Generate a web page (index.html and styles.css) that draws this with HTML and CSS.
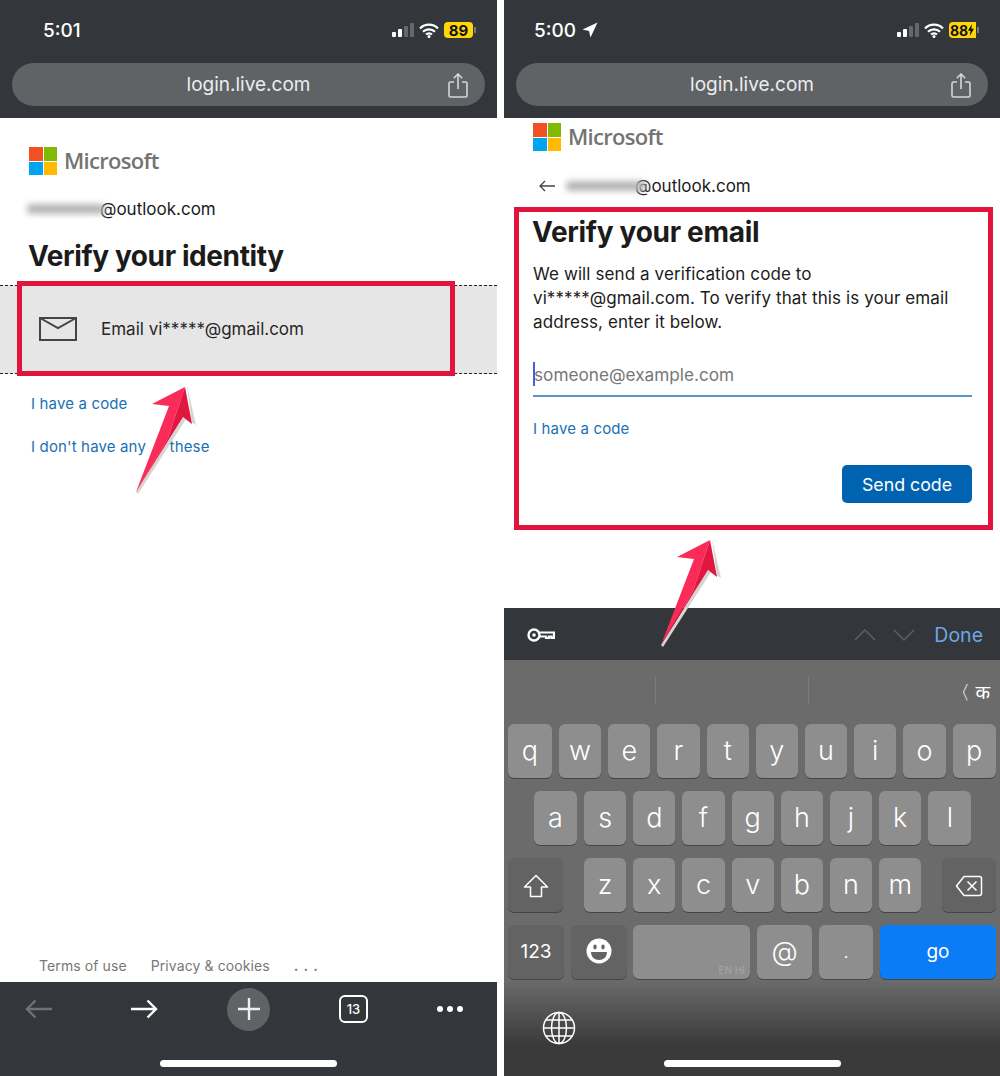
FILE: index.html
```html
<!DOCTYPE html>
<html lang="en">
	<head>
		<meta charset="UTF-8" />
		<title>Verify your identity</title>
		<link rel="stylesheet" href="styles.css">
	</head>
	<body>
		<div class="phone phone-left">
			<header class="top-bar">
				<div class="status-bar">
					<span class="time">5:01</span>
					<div class="status-icons">
						<svg class="signal" viewBox="0 0 22 14"><rect x="0" y="9" width="4" height="5" rx="1" fill="#fff"/><rect x="6" y="6" width="4" height="8" rx="1" fill="#fff"/><rect x="12" y="3" width="4" height="11" rx="1" fill="#66696c"/><rect x="18" y="0" width="4" height="14" rx="1" fill="#66696c"/></svg>
						<svg class="wifi" viewBox="0 0 20 15"><path d="M1 5.500a12.600 12.600 0 0 1 18 0M4 8.800a8.400 8.400 0 0 1 12 0M7 11.600a4.200 4.200 0 0 1 6 0" fill="none" stroke="#fff" stroke-width="2.200"/><circle cx="10" cy="13.400" r="1.500" fill="#fff"/></svg>
						<div class="battery"><span class="battery-level">89</span></div>
						<span class="battery-tip"></span>
					</div>
				</div>
				<div class="url-pill">
					<span>login.live.com</span>
					<svg class="share" viewBox="0 0 20 25"><path d="M6 9H2.500A1.500 1.500 0 0 0 1 10.500V22.500A1.500 1.500 0 0 0 2.500 24H17.500A1.500 1.500 0 0 0 19 22.500V10.500A1.500 1.500 0 0 0 17.500 9H14M10 16V1.500M5.800 5.200L10 1L14.200 5.200" fill="none" stroke="#d5d6d7" stroke-width="1.600"/></svg>
				</div>
			</header>

			<main class="page">
				<div class="ms-logo ms-logo-left">
					<div class="ms-squares"><i class="red"></i><i class="green"></i><i class="blue"></i><i class="yellow"></i></div>
					<span>Microsoft</span>
				</div>
				<div class="account account-left"><span class="smudge smudge-left"></span>@outlook.com</div>
				<h1 class="title-left">Verify your identity</h1>
				<div class="option">
					<svg class="mail" viewBox="0 0 38 24"><path d="M1 1H37V23H1ZM1 1L19 11L37 1" fill="none" stroke="#444" stroke-width="2"/></svg>
					<span>Email vi*****@gmail.com</span>
				</div>
				<a class="link link-first">I have a code</a>
				<a class="link link-second">I don't have any <span class="under-arrow">of</span> these</a>
				<footer class="legal">
					<span>Terms of use</span>
					<span>Privacy &amp; cookies</span>
					<span class="legal-more">...</span>
				</footer>
			</main>

			<nav class="bottom-bar">
				<div class="tools">
					<svg class="nav-arrow" viewBox="0 0 28 20"><path d="M27 10H2M10.500 1.500L2 10L10.500 18.500" fill="none" stroke="#6f7174" stroke-width="2.400"/></svg>
					<svg class="nav-arrow nav-forward" viewBox="0 0 28 20"><path d="M1 10H26M17.500 1.500L26 10L17.500 18.500" fill="none" stroke="#fff" stroke-width="2.400"/></svg>
					<div class="new-tab"><svg viewBox="0 0 22 22"><path d="M11 0V22M0 11H22" stroke="#eee" stroke-width="2.400"/></svg></div>
					<div class="tab-count">13</div>
					<div class="more"><i></i><i></i><i></i></div>
				</div>
				<div class="home-bar"></div>
			</nav>

			<div class="red-box"></div>
			<svg class="arrow arrow-left" viewBox="0 0 70 116"><use href="#arrow-shape"/></svg>
		</div>

		<div class="phone phone-right">
			<header class="top-bar">
				<div class="status-bar">
					<span class="time time-right">5:00</span>
					<svg class="location" viewBox="0 0 16 16"><path d="M15.500 .5L8.500 15.500L7 9L.5 7.500Z" fill="#fff"/></svg>
					<div class="status-icons">
						<svg class="signal" viewBox="0 0 22 14"><rect x="0" y="9" width="4" height="5" rx="1" fill="#fff"/><rect x="6" y="6" width="4" height="8" rx="1" fill="#fff"/><rect x="12" y="3" width="4" height="11" rx="1" fill="#66696c"/><rect x="18" y="0" width="4" height="14" rx="1" fill="#66696c"/></svg>
						<svg class="wifi" viewBox="0 0 20 15"><path d="M1 5.500a12.600 12.600 0 0 1 18 0M4 8.800a8.400 8.400 0 0 1 12 0M7 11.600a4.200 4.200 0 0 1 6 0" fill="none" stroke="#fff" stroke-width="2.200"/><circle cx="10" cy="13.400" r="1.500" fill="#fff"/></svg>
						<div class="battery battery-charging"><span class="battery-level">88</span><svg class="bolt" viewBox="0 0 7 14"><path d="M4.500 0L0 8H3L2 14L7 5.500H4Z" fill="#111"/></svg></div>
						<span class="battery-tip"></span>
					</div>
				</div>
				<div class="url-pill">
					<span>login.live.com</span>
					<svg class="share" viewBox="0 0 20 25"><path d="M6 9H2.500A1.500 1.500 0 0 0 1 10.500V22.500A1.500 1.500 0 0 0 2.500 24H17.500A1.500 1.500 0 0 0 19 22.500V10.500A1.500 1.500 0 0 0 17.500 9H14M10 16V1.500M5.800 5.200L10 1L14.200 5.200" fill="none" stroke="#d5d6d7" stroke-width="1.600"/></svg>
				</div>
			</header>

			<main class="page page-email">
				<div class="ms-logo ms-logo-right">
					<div class="ms-squares"><i class="red"></i><i class="green"></i><i class="blue"></i><i class="yellow"></i></div>
					<span>Microsoft</span>
				</div>
				<div class="account account-right">
					<svg class="back" viewBox="0 0 16 12"><path d="M16 6H1M6 1L1 6L6 11" fill="none" stroke="#444" stroke-width="1.300"/></svg>
					<span class="smudge smudge-right"></span>@outlook.com
				</div>
				<section class="card">
					<h1>Verify your email</h1>
					<p>We will send a verification code to<br>vi*****@gmail.com. To verify that this is your email<br>address, enter it below.</p>
					<div class="field"><i class="caret"></i>someone@example.com</div>
					<a class="link">I have a code</a>
					<div class="actions"><button class="send-btn">Send code</button></div>
				</section>
			</main>

			<div class="kb-toolbar">
				<svg class="key-icon" viewBox="0 0 28 14"><circle cx="7" cy="7" r="5.500" fill="none" stroke="#fff" stroke-width="2.400"/><circle cx="7" cy="7" r="1.800" fill="#fff"/><path d="M12.500 4.500H27V10H24.500V8.500H22V10H19V8.500H12.500" fill="none" stroke="#fff" stroke-width="2.200"/></svg>
				<svg class="chevron chevron-up" viewBox="0 0 22 12"><path d="M1 11L11 1L21 11" fill="none" stroke="#5d6063" stroke-width="1.500"/></svg>
				<svg class="chevron" viewBox="0 0 22 12"><path d="M1 1L11 11L21 1" fill="none" stroke="#5d6063" stroke-width="1.500"/></svg>
				<span class="done">Done</span>
			</div>

			<div class="keyboard">
				<div class="suggestions">
					<i class="sug-line sug-line-first"></i>
					<i class="sug-line sug-line-second"></i>
					<span class="lang-hint">〈 क</span>
				</div>
				<div class="kb-row kb-row-one">
					<span class="k">q</span><span class="k">w</span><span class="k">e</span><span class="k">r</span><span class="k">t</span><span class="k">y</span><span class="k">u</span><span class="k">i</span><span class="k">o</span><span class="k">p</span>
				</div>
				<div class="kb-row kb-row-two">
					<span class="k">a</span><span class="k">s</span><span class="k">d</span><span class="k">f</span><span class="k">g</span><span class="k">h</span><span class="k">j</span><span class="k">k</span><span class="k">l</span>
				</div>
				<div class="kb-row">
					<span class="k k-dark k-shift"><svg viewBox="0 0 26 24"><path d="M13 1.500L24.500 13H18.500V22.500H7.500V13H1.500Z" fill="none" stroke="#fff" stroke-width="1.500" stroke-linejoin="round"/></svg></span>
					<span class="k">z</span><span class="k">x</span><span class="k">c</span><span class="k">v</span><span class="k">b</span><span class="k">n</span><span class="k">m</span>
					<span class="k k-dark k-delete"><svg viewBox="0 0 28 22"><path d="M9 1.500H24.500A2 2 0 0 1 26.500 3.500V18.500A2 2 0 0 1 24.500 20.500H9L1.500 11ZM12.500 6.500L21.500 15.500M21.500 6.500L12.500 15.500" fill="none" stroke="#fff" stroke-width="1.500" stroke-linejoin="round"/></svg></span>
				</div>
				<div class="kb-row">
					<span class="k k-dark k-num">123</span>
					<span class="k k-dark k-emoji"><svg viewBox="0 0 26 26"><circle cx="13" cy="13" r="12.500" fill="#fff"/><ellipse cx="9" cy="9" rx="1.700" ry="2.400" fill="#636363"/><ellipse cx="17" cy="9" rx="1.700" ry="2.400" fill="#636363"/><path d="M5 14H21C21 19 17.500 22 13 22S5 19 5 14Z" fill="#636363"/></svg></span>
					<span class="k k-space"><small>EN HI</small></span>
					<span class="k k-at">@</span>
					<span class="k k-dot">.</span>
					<span class="k k-go">go</span>
				</div>
				<div class="kb-globe">
					<svg viewBox="0 0 34 34"><g fill="none" stroke="#fff" stroke-width="1.500"><circle cx="17" cy="17" r="15.500"/><ellipse cx="17" cy="17" rx="7.500" ry="15.500"/><path d="M17 1.500V32.500M1.500 17H32.500M4 9H30M4 25H30"/></g></svg>
				</div>
				<div class="home-bar"></div>
			</div>

			<div class="card-frame"></div>
			<svg class="arrow arrow-right" viewBox="0 0 70 116"><use href="#arrow-shape"/></svg>
		</div>

		<svg class="defs" width="0" height="0">
			<symbol id="arrow-shape" viewBox="0 0 70 116">
				<path d="M57 6L66 45L56 39L8 114L6 112L53 37L62 44Z" fill="#d5d5d0"/>
				<path d="M55 7L22 24L39 26L6 112L38 58Z" fill="#fb2b59"/>
				<path d="M55 7L62 44L53 37L6 112L38 58Z" fill="#e0173f"/>
			</symbol>
		</svg>
	</body>
</html>
```

FILE: styles.css
```css
* {
	margin: 0;
	padding: 0;
	box-sizing: border-box;
}

body {
	font-family: Inter, 'Liberation Sans', sans-serif;
	background: #fff;
	width: 1000px;
	height: 1076px;
	display: flex;
	justify-content: space-between;
	overflow: hidden;
}

.phone {
	position: relative;
	height: 1076px;
	display: flex;
	flex-direction: column;
}

.phone-left {
	width: 497px;
}

.phone-right {
	width: 496px;
}

.defs {
	position: absolute;
}

/* browser chrome */
.top-bar {
	height: 118px;
	background: #33363a;
	padding: 0 12px;
	flex-shrink: 0;
}

.status-bar {
	height: 63px;
	display: flex;
	align-items: center;
	padding: 0 9px 3px 31px;
	color: #fff;
}

.time {
	font-size: 19px;
	font-weight: 500;
}

.time-right {
	margin-left: -13px;
}

.location {
	width: 16px;
	height: 16px;
	margin-left: 6px;
}

.status-icons {
	margin-left: auto;
	display: flex;
	align-items: center;
}

.signal {
	width: 22px;
	height: 14px;
}

.wifi {
	width: 20px;
	height: 15px;
	margin-left: 5px;
}

.battery {
	width: 29px;
	height: 16px;
	margin-left: 5px;
	background: #ffd60a;
	border-radius: 4px;
	color: #111;
	font-size: 15px;
	font-weight: 700;
	display: flex;
	align-items: center;
	justify-content: center;
}

.battery-charging {
	width: 27px;
	justify-content: flex-start;
	padding-left: 1px;
	border-radius: 4px 0 0 4px;
	font-size: 14px;
}

.bolt {
	width: 6px;
	height: 12px;
}

.battery-tip {
	width: 2px;
	height: 6px;
	margin-left: 1px;
	background: #77797b;
}

.url-pill {
	position: relative;
	height: 43px;
	background: #5f6366;
	border-radius: 22px;
	display: flex;
	align-items: center;
	justify-content: center;
	color: #eceded;
	font-size: 19px;
	padding-bottom: 1px;
}

.share {
	position: absolute;
	right: 17px;
	top: 10px;
	width: 20px;
	height: 25px;
}

/* page content */
.page {
	flex: 1;
	display: flex;
	flex-direction: column;
	background: #fff;
}

.ms-logo {
	display: flex;
	align-items: center;
	gap: 7px;
	color: #737373;
	font-family: 'Open Sans', sans-serif;
	font-size: 22px;
	font-weight: 600;
	letter-spacing: -0.7px;
	height: 28px;
}

.ms-logo span {
	padding-bottom: 3px;
}

.ms-logo-left {
	margin: 29px 0 0 29px;
}

.ms-logo-right {
	margin: 5px 0 0 29px;
}

.ms-squares {
	width: 28px;
	height: 28px;
	display: grid;
	grid-template-columns: 1fr 1fr;
	gap: 1px;
}

.red {
	background: #f25022;
}

.green {
	background: #7fba00;
}

.blue {
	background: #00a4ef;
}

.yellow {
	background: #ffb900;
}

.account {
	display: flex;
	align-items: center;
	font-size: 17px;
	color: #1b1b1b;
	height: 24px;
}

.account-left {
	margin: 22px 0 0 27px;
}

.account-right {
	margin: 23px 0 0 35px;
}

.smudge {
	height: 10px;
	background: #b5b5b5;
	filter: blur(3px);
	border-radius: 4px;
}

.smudge-left {
	width: 78px;
	margin-right: -5px;
}

.smudge-right {
	width: 80px;
	margin: 0 -11px 0 11px;
}

.back {
	width: 16px;
	height: 12px;
}

h1 {
	font-size: 28px;
	font-weight: 700;
	color: #1b1b1b;
	letter-spacing: -0.3px;
}

.title-left {
	margin: 16px 0 0 28px;
	line-height: 38px;
	letter-spacing: -0.4px;
}

.option {
	margin-top: 10px;
	height: 89px;
	background: #e6e6e6;
	border-top: 1px dashed #222;
	border-bottom: 1px dashed #222;
	display: flex;
	align-items: center;
	padding: 0 0 2px 39px;
	font-size: 17px;
	color: #262626;
}

.mail {
	width: 38px;
	height: 24px;
	margin-right: 24px;
}

.link {
	color: #1a70b3;
	font-size: 15px;
	letter-spacing: 0.15px;
	display: block;
}

.link-first {
	margin: 20px 0 0 31px;
}

.link-second {
	margin: 24px 0 0 31px;
}

.under-arrow {
	color: transparent;
}

.legal {
	margin-top: auto;
	height: 25px;
	padding: 0 0 0 39px;
	display: flex;
	gap: 24px;
	color: #777;
	font-size: 14px;
	letter-spacing: 0.1px;
}

.legal-more {
	letter-spacing: 5px;
	font-weight: 700;
}

.bottom-bar {
	height: 94px;
	background: #33363a;
	position: relative;
	flex-shrink: 0;
}

.tools {
	height: 54px;
	padding-left: 25px;
	display: flex;
	align-items: center;
	gap: 69px;
}

.nav-arrow {
	width: 28px;
	height: 20px;
}

.nav-forward {
	margin-left: 8px;
}

.new-tab {
	width: 43px;
	height: 43px;
	border-radius: 50%;
	background: #5f6366;
	display: flex;
	align-items: center;
	justify-content: center;
}

.new-tab svg {
	width: 22px;
	height: 22px;
}

.tab-count {
	width: 29px;
	height: 28px;
	border: 2px solid #fff;
	border-radius: 6px;
	color: #fff;
	font-size: 13px;
	font-weight: 500;
	display: flex;
	align-items: center;
	justify-content: center;
}

.more {
	display: flex;
	gap: 4px;
}

.more i {
	width: 6px;
	height: 6px;
	border-radius: 50%;
	background: #fff;
}

.home-bar {
	position: absolute;
	left: 160px;
	bottom: 9px;
	width: 177px;
	height: 7px;
	background: #fff;
	border-radius: 4px;
}

/* verify email card */
.card {
	margin: 31px 0 0 29px;
	width: 439px;
}

.card h1 {
	line-height: 38px;
	margin: -16px 0 0 -1px;
}

.card p {
	font-size: 17px;
	letter-spacing: 0.1px;
	line-height: 24px;
	color: #1b1b1b;
	margin-top: 11px;
}

.field {
	position: relative;
	margin-top: 19px;
	height: 44px;
	border-bottom: 2px solid #5a94c4;
	font-size: 17.200px;
	color: #777;
	display: flex;
	align-items: center;
	padding-left: 1px;
}

.caret {
	position: absolute;
	left: 0;
	top: 9px;
	width: 2px;
	height: 24px;
	background: #4a5fd0;
}

.card .link {
	margin-top: 23px;
	line-height: 18px;
}

.actions {
	display: flex;
	justify-content: flex-end;
	margin-top: 27px;
}

.send-btn {
	width: 130px;
	height: 38px;
	background: #0063b1;
	color: #fff;
	border: none;
	border-radius: 5px;
	font-family: inherit;
	font-size: 17.800px;
}

/* annotations over the screenshots */
.red-box {
	position: absolute;
	left: 17px;
	top: 281px;
	width: 438px;
	height: 95px;
	border: 5px solid #e0143c;
}

.card-frame {
	position: absolute;
	left: 10px;
	top: 207px;
	width: 479px;
	height: 323px;
	border: 5px solid #e0143c;
}

.arrow {
	position: absolute;
	width: 70px;
	height: 116px;
}

.arrow-left {
	left: 130px;
	top: 380px;
}

.arrow-right {
	left: 151px;
	top: 533px;
}

/* keyboard */
.kb-toolbar {
	height: 52px;
	background: #33363a;
	display: flex;
	align-items: center;
	padding: 2px 17px 0 23px;
	flex-shrink: 0;
}

.key-icon {
	width: 28px;
	height: 14px;
}

.chevron {
	width: 22px;
	height: 12px;
	margin-left: 17px;
}

.chevron-up {
	margin-left: auto;
}

.done {
	margin-left: 19px;
	color: #6ea6e4;
	font-size: 19.500px;
}

.keyboard {
	position: relative;
	height: 416px;
	padding: 0 4px;
	background: linear-gradient(
		#6b6b6b 0,
		#6b6b6b 320px,
		#3a3a3a 385px
	);
	display: flex;
	flex-direction: column;
	gap: 13px;
}

.suggestions {
	height: 51px;
	position: relative;
}

.sug-line {
	position: absolute;
	top: 16px;
	width: 1px;
	height: 29px;
	background: #7c7c7c;
}

.sug-line-first {
	left: 147px;
}

.sug-line-second {
	left: 300px;
}

.lang-hint {
	position: absolute;
	right: 6px;
	top: 19px;
	color: #fff;
	font-size: 19px;
	font-family: 'Noto Sans', 'DejaVu Sans', sans-serif;
}

.kb-row {
	display: flex;
	gap: 7px;
	height: 54px;
}

.kb-row-one .k:first-child {
	width: 44px;
}

.kb-row-one .k:last-child {
	width: 43.500px;
}

.kb-row-two {
	padding-left: 26px;
}

.kb-row-two .k:first-child,
.kb-row-two .k:last-child {
	width: 43px;
}

.k {
	width: 42.200px;
	height: 54px;
	background: #8e8e8e;
	border-radius: 6px;
	box-shadow: 0 1px 0 #454545;
	color: #fff;
	font-size: 27px;
	font-weight: 300;
	display: flex;
	align-items: center;
	justify-content: center;
	padding-bottom: 2px;
	flex-shrink: 0;
}

.k-dark {
	background: #636363;
}

.k-shift {
	width: 55px;
	margin-right: 14px;
}

.k-shift svg {
	width: 26px;
	height: 24px;
	margin-top: 3px;
}

.k-delete {
	width: 54px;
	margin-left: 14px;
}

.k-delete svg {
	width: 28px;
	height: 22px;
	margin-top: 3px;
}

.k-num {
	width: 56px;
	font-size: 19px;
	font-weight: 400;
}

.k-emoji {
	width: 56px;
	margin-right: -1px;
}

.k-emoji svg {
	width: 26px;
	height: 26px;
}

.k-space {
	position: relative;
	width: 117px;
}

.k-space small {
	position: absolute;
	right: 5px;
	bottom: 3px;
	font-size: 10px;
	font-weight: 400;
	color: #a6a6a6;
}

.k-at {
	width: 55px;
}

.k-dot {
	width: 54px;
	font-size: 20px;
}

.k-go {
	flex: 1;
	width: auto;
	background: #0a7cf5;
	font-size: 19px;
	font-weight: 400;
}

.kb-globe {
	padding: 19px 0 0 34px;
}

.kb-globe svg {
	width: 34px;
	height: 34px;
}
```
